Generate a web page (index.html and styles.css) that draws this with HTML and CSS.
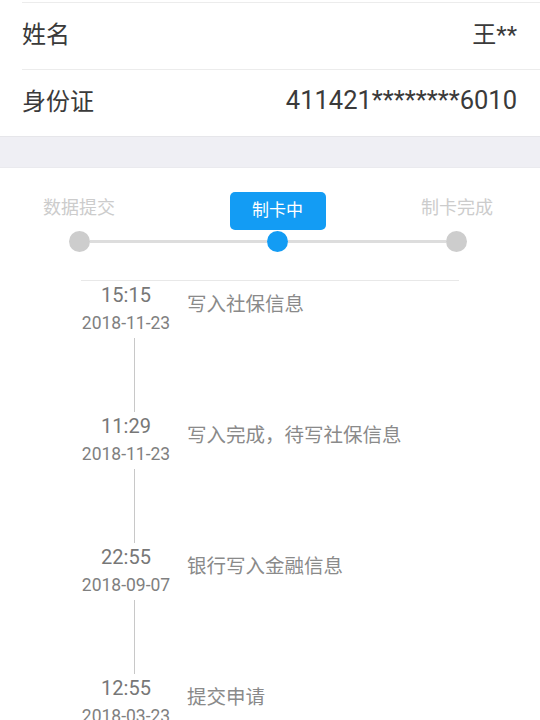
FILE: index.html
```html
<!DOCTYPE html>
<html lang="zh">
<head>
<meta charset="utf-8">
<link rel="stylesheet" href="styles.css">
</head>
<body>
<div class="page">
  <section class="info">
    <div class="row"><span class="label">姓名</span><span class="value">王**</span></div>
    <div class="row"><span class="label">身份证</span><span class="value num">411421********6010</span></div>
  </section>
  <div class="band"></div>
  <section class="steps">
    <div class="labels">
      <span class="step-label">数据提交</span>
      <span class="step-tip">制卡中</span>
      <span class="step-label">制卡完成</span>
    </div>
    <div class="track">
      <span class="dot"></span>
      <span class="seg seg-a"></span>
      <span class="dot dot-active"></span>
      <span class="seg seg-b"></span>
      <span class="dot"></span>
    </div>
  </section>
  <div class="split"></div>
  <section class="timeline">
    <div class="entry">
      <div class="when"><div class="time">15:15</div><div class="date">2018-11-23</div><div class="vline"></div></div>
      <div class="desc">写入社保信息</div>
    </div>
    <div class="entry">
      <div class="when"><div class="time">11:29</div><div class="date">2018-11-23</div><div class="vline"></div></div>
      <div class="desc">写入完成，待写社保信息</div>
    </div>
    <div class="entry">
      <div class="when"><div class="time">22:55</div><div class="date">2018-09-07</div><div class="vline"></div></div>
      <div class="desc">银行写入金融信息</div>
    </div>
    <div class="entry">
      <div class="when"><div class="time">12:55</div><div class="date">2018-03-23</div></div>
      <div class="desc">提交申请</div>
    </div>
  </section>
</div>
</body>
</html>
```
FILE: styles.css
```css
html, body {
  margin: 0;
  padding: 0;
  background: #fff;
}
body {
  font-family: Roboto, "Noto Sans CJK SC", "Noto Sans", sans-serif;
  width: 540px;
  height: 720px;
  overflow: hidden;
}
.page {
  padding-top: 2px;
}
.info {
  padding-left: 22px;
}
.row {
  display: flex;
  justify-content: space-between;
  align-items: center;
  height: 67px;
  box-sizing: border-box;
  border-top: 1px solid #ececec;
  padding-right: 23px;
  padding-bottom: 7px;
  color: #3a3a3a;
}
.label {
  font-size: 24px;
}
.value {
  font-size: 24px;
}
.num {
  font-size: 25.5px;
}
.band {
  height: 32px;
  box-sizing: border-box;
  background: #efeff4;
  border-top: 1px solid #e6e6ea;
  border-bottom: 1px solid #eaeaee;
}
.steps {
  padding-top: 24px;
}
.labels {
  display: grid;
  grid-template-columns: 158px 239px 120px;
  height: 38px;
  align-items: start;
}
.step-label {
  justify-self: center;
  font-size: 18px;
  line-height: 32px;
  color: #cccccc;
}
.step-tip {
  justify-self: center;
  width: 96px;
  height: 38px;
  line-height: 36px;
  text-align: center;
  background: #139cf4;
  color: #fff;
  font-size: 17px;
  border-radius: 5px;
}
.track {
  display: flex;
  align-items: center;
  height: 21px;
  margin-top: 1px;
  padding-left: 69px;
}
.dot {
  width: 21px;
  height: 21px;
  border-radius: 50%;
  background: #cdcdcd;
  flex: none;
}
.dot-active {
  background: #139cf4;
}
.seg {
  height: 3px;
  background: #dddddd;
  flex: none;
}
.seg-a {
  width: 177px;
}
.seg-b {
  width: 158px;
}
.split {
  margin: 28px 0 0 81px;
  width: 378px;
  height: 1px;
  background: #e8e8e8;
}
.timeline {
  padding-left: 81px;
}
.entry {
  display: flex;
  gap: 16px;
}
.when {
  width: 90px;
  flex: none;
  display: flex;
  flex-direction: column;
  align-items: center;
  white-space: nowrap;
}
.time {
  font-size: 20px;
  line-height: 28px;
  color: #777;
}
.date {
  font-size: 17.5px;
  line-height: 28px;
  color: #808080;
}
.vline {
  align-self: flex-start;
  width: 1px;
  height: 74px;
  margin: 1px 0 0 53px;
  background: #c8c8c8;
}
.desc {
  padding-top: 10px;
  font-size: 19.5px;
  line-height: 28px;
  color: #8a8a8a;
}
```
